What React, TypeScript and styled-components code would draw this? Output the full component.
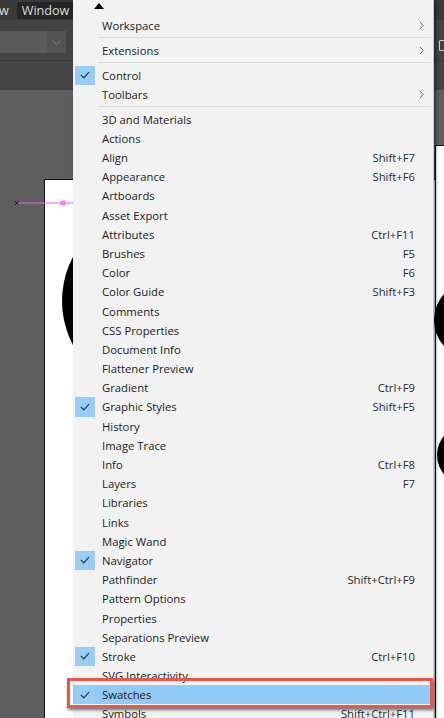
import React from "react";
import styled, { createGlobalStyle } from "styled-components";

const GlobalStyle = createGlobalStyle`
  html, body {
    margin: 0;
    padding: 0;
    background: #5d5d5d;
    overflow: hidden;
  }
`;

type Item =
  | { sep: true }
  | { label: string; shortcut?: string; checked?: boolean; sub?: boolean; active?: boolean };

const items: Item[] = [
  { label: "Workspace", sub: true },
  { sep: true },
  { label: "Extensions", sub: true },
  { sep: true },
  { label: "Control", checked: true },
  { label: "Toolbars", sub: true },
  { sep: true },
  { label: "3D and Materials" },
  { label: "Actions" },
  { label: "Align", shortcut: "Shift+F7" },
  { label: "Appearance", shortcut: "Shift+F6" },
  { label: "Artboards" },
  { label: "Asset Export" },
  { label: "Attributes", shortcut: "Ctrl+F11" },
  { label: "Brushes", shortcut: "F5" },
  { label: "Color", shortcut: "F6" },
  { label: "Color Guide", shortcut: "Shift+F3" },
  { label: "Comments" },
  { label: "CSS Properties" },
  { label: "Document Info" },
  { label: "Flattener Preview" },
  { label: "Gradient", shortcut: "Ctrl+F9" },
  { label: "Graphic Styles", shortcut: "Shift+F5", checked: true },
  { label: "History" },
  { label: "Image Trace" },
  { label: "Info", shortcut: "Ctrl+F8" },
  { label: "Layers", shortcut: "F7" },
  { label: "Libraries" },
  { label: "Links" },
  { label: "Magic Wand" },
  { label: "Navigator", checked: true },
  { label: "Pathfinder", shortcut: "Shift+Ctrl+F9" },
  { label: "Pattern Options" },
  { label: "Properties" },
  { label: "Separations Preview" },
  { label: "Stroke", shortcut: "Ctrl+F10", checked: true },
  { label: "SVG Interactivity" },
  { label: "Swatches", checked: true, active: true },
  { label: "Symbols", shortcut: "Shift+Ctrl+F11" },
];

const Screen = styled.div`
  position: relative;
  width: 444px;
  height: 718px;
  overflow: hidden;
  display: flex;
  flex-direction: column;
  font-family: "Open Sans", "Noto Sans", sans-serif;
`;

const TopBar = styled.div`
  height: 20px;
  background: #3a3a3a;
  display: flex;
  align-items: center;
  gap: 8px;
  font-size: 12.6px;
  color: #dcdcdc;
`;

const MenuName = styled.span<{ $open?: boolean }>`
  height: 17px;
  line-height: 17px;
  padding: 0 ${(p) => (p.$open ? "5px" : "0")};
  margin-left: ${(p) => (p.$open ? "0" : "-1px")};
  background: ${(p) => (p.$open ? "#262626" : "transparent")};
  border-radius: 2px;
`;

const ControlBar = styled.div`
  height: 40px;
  background: #434343;
  display: flex;
  align-items: center;
  padding-top: 4px;
  box-sizing: border-box;
`;

const Field = styled.div`
  width: 47px;
  height: 22px;
  background-color: #5c5c5c;
  background-image: radial-gradient(#6a6a6a 0.6px, transparent 0.7px);
  background-size: 4px 4px;
`;

const FieldArrow = styled.div`
  width: 19px;
  height: 22px;
  background: #545454;
  display: flex;
  align-items: center;
  justify-content: center;
`;

const TabBand = styled.div`
  height: 30px;
  background: #444444;
  border-top: 1px solid #393939;
  box-sizing: border-box;
`;

const Canvas = styled.div`
  position: relative;
  flex: 1;
  background: #5e5e5e;
`;

const Artboard = styled.div<{ $left: number; $top: number }>`
  position: absolute;
  left: ${(p) => p.$left}px;
  top: ${(p) => p.$top}px;
  right: -20px;
  bottom: -20px;
  background: #ffffff;
  border-left: 1px solid #111;
  border-top: 1px solid #111;
`;

const Shapes = styled.svg`
  position: absolute;
  left: 0;
  top: 0;
  width: 444px;
  height: 628px;
`;

const Menu = styled.div`
  position: absolute;
  left: 73px;
  top: 0;
  width: 361px;
  height: 740px;
  background: #f2f2f2;
  border-right: 1px solid #c9c9c9;
  box-sizing: border-box;
  box-shadow: 2px 0 3px rgba(0, 0, 0, 0.45);
  padding-top: 16px;
  font-size: 11.3px;
  color: #1b1b1b;
`;

const ScrollUp = styled.div`
  position: absolute;
  left: 21px;
  top: 3px;
  width: 0;
  height: 0;
  border-left: 5px solid transparent;
  border-right: 5px solid transparent;
  border-bottom: 6px solid #000;
`;

const Row = styled.div<{ $active?: boolean }>`
  position: relative;
  height: 19.2px;
  display: grid;
  grid-template-columns: 29px 1fr auto 18px;
  align-items: center;
  white-space: nowrap;
  background: ${(p) => (p.$active ? "#92c9f6" : "transparent")};
  margin-right: ${(p) => (p.$active ? "3px" : "0")};

  ${(p) =>
    p.$active &&
    `
    &::after {
      content: "";
      position: absolute;
      left: -6px;
      right: -3px;
      top: -7px;
      bottom: -4px;
      border: 3px solid #e8584a;
      box-shadow: 1px 2px 3px rgba(0, 0, 0, 0.55);
      z-index: 2;
    }
  `}
`;

const CheckBox = styled.div<{ $on?: boolean }>`
  width: 20px;
  height: 19.2px;
  margin-left: 2px;
  background: ${(p) => (p.$on ? "#99cdf8" : "transparent")};
  display: flex;
  align-items: center;
  justify-content: center;
`;

const Label = styled.span`
  line-height: 19px;
`;

const Shortcut = styled.span`
  color: #2a2a2a;
  text-align: right;
`;

const SubArrow = styled.div`
  display: flex;
  align-items: center;
  padding-left: 4px;
`;

const Separator = styled.div`
  height: 5.6px;
  margin: 0 2px 0 25px;
  display: flex;
  align-items: center;
  &::before {
    content: "";
    flex: 1;
    height: 1px;
    background: #dadada;
  }
`;

const Check = () => (
  <svg width="10" height="8" viewBox="0 0 10 8">
    <polyline points="1,4 3.8,6.8 9,1.2" fill="none" stroke="#333" strokeWidth="1.2" />
  </svg>
);

const Chevron = () => (
  <svg width="5" height="9" viewBox="0 0 5 9">
    <polyline points="0.8,0.8 4.2,4.5 0.8,8.2" fill="none" stroke="#666" strokeWidth="1" />
  </svg>
);

const DocIcon = styled.div`
  position: absolute;
  right: -4px;
  top: 40px;
  width: 9px;
  height: 11px;
  border: 1px solid #d0d0d0;
  border-radius: 1px;
  box-sizing: border-box;
`;

export default function App() {
  return (
    <>
      <GlobalStyle />
      <Screen>
        <TopBar>
          <MenuName>w</MenuName>
          <MenuName $open>Window</MenuName>
        </TopBar>
        <ControlBar>
          <Field />
          <FieldArrow>
            <svg width="9" height="5" viewBox="0 0 9 5">
              <polyline points="0.5,0.5 4.5,4.5 8.5,0.5" fill="none" stroke="#7a7a7a" strokeWidth="1" />
            </svg>
          </FieldArrow>
        </ControlBar>
        <TabBand />
        <Canvas>
          <Artboard $left={44} $top={89} />
          <Artboard $left={435} $top={55} />
          <Shapes viewBox="0 0 444 628">
            <circle cx="156" cy="211" r="94" fill="#000" />
            <circle cx="473" cy="230" r="39" fill="#000" />
            <circle cx="467" cy="365" r="30" fill="#000" />
            <line x1="17" y1="113" x2="80" y2="113" stroke="#f25cf2" strokeWidth="1.2" />
            <path d="M15 111 L19 115 M19 111 L15 115" stroke="#222" strokeWidth="1" />
            <rect x="61" y="111" width="4" height="4" fill="#ff8cff" stroke="#f25cf2" strokeWidth="0.8" />
          </Shapes>
        </Canvas>
        <DocIcon />
        <Menu>
          <ScrollUp />
          {items.map((it, i) =>
            "sep" in it ? (
              <Separator key={i} />
            ) : (
              <Row key={i} $active={it.active}>
                <CheckBox $on={it.checked}>{it.checked && <Check />}</CheckBox>
                <Label>{it.label}</Label>
                <Shortcut>{it.shortcut}</Shortcut>
                <SubArrow>{it.sub && <Chevron />}</SubArrow>
              </Row>
            )
          )}
        </Menu>
      </Screen>
    </>
  );
}
